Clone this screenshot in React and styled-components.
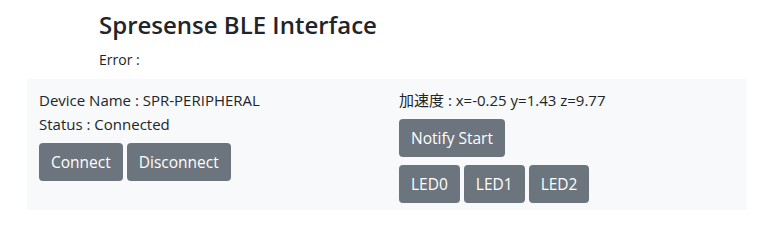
import React from "react";
import styled, { createGlobalStyle } from "styled-components";

const GlobalStyle = createGlobalStyle`
  body {
    margin: 0;
    background: #ffffff;
    color: #212529;
    font-family: "Open Sans", "Noto Sans CJK JP", sans-serif;
  }
`;

const Page = styled.div`
  width: 757px;
  padding-top: 8px;
`;

const Header = styled.div`
  padding-left: 99px;
  h1 {
    margin: 0;
    font-size: 24px;
    font-weight: 600;
    line-height: 34px;
  }
  p {
    margin: 6px 0 0;
    font-size: 14px;
    line-height: 24px;
  }
`;

const Panel = styled.div`
  margin: 7px 10px 0 27px;
  background-color: #f8f9fa;
  display: grid;
  grid-template-columns: 1fr 1fr;
  padding: 9px 0 7px;
`;

const Column = styled.div`
  padding: 0 12px;
  display: flex;
  flex-direction: column;
`;

const Line = styled.div`
  font-size: 15px;
  line-height: 24px;
`;

const ButtonRow = styled.div`
  display: flex;
  gap: 4px;
  margin-top: ${(p) => p.$top || 8}px;
`;

const Button = styled.button`
  background-color: #6c757d;
  color: #fff;
  border: none;
  border-radius: 4px;
  height: 38px;
  padding: 0 12px;
  font-family: "Open Sans", sans-serif;
  font-size: 15.5px;
  cursor: pointer;
`;

export default function App() {
  return (
    <>
      <GlobalStyle />
      <Page>
        <Header>
          <h1>Spresense BLE Interface</h1>
          <p>Error :</p>
        </Header>
        <Panel>
          <Column>
            <Line>Device Name : SPR-PERIPHERAL</Line>
            <Line>Status : Connected</Line>
            <ButtonRow $top={7}>
              <Button>Connect</Button>
              <Button>Disconnect</Button>
            </ButtonRow>
          </Column>
          <Column>
            <Line>加速度 : x=-0.25 y=1.43 z=9.77</Line>
            <ButtonRow $top={7}>
              <Button>Notify Start</Button>
            </ButtonRow>
            <ButtonRow>
              <Button>LED0</Button>
              <Button>LED1</Button>
              <Button>LED2</Button>
            </ButtonRow>
          </Column>
        </Panel>
      </Page>
    </>
  );
}
